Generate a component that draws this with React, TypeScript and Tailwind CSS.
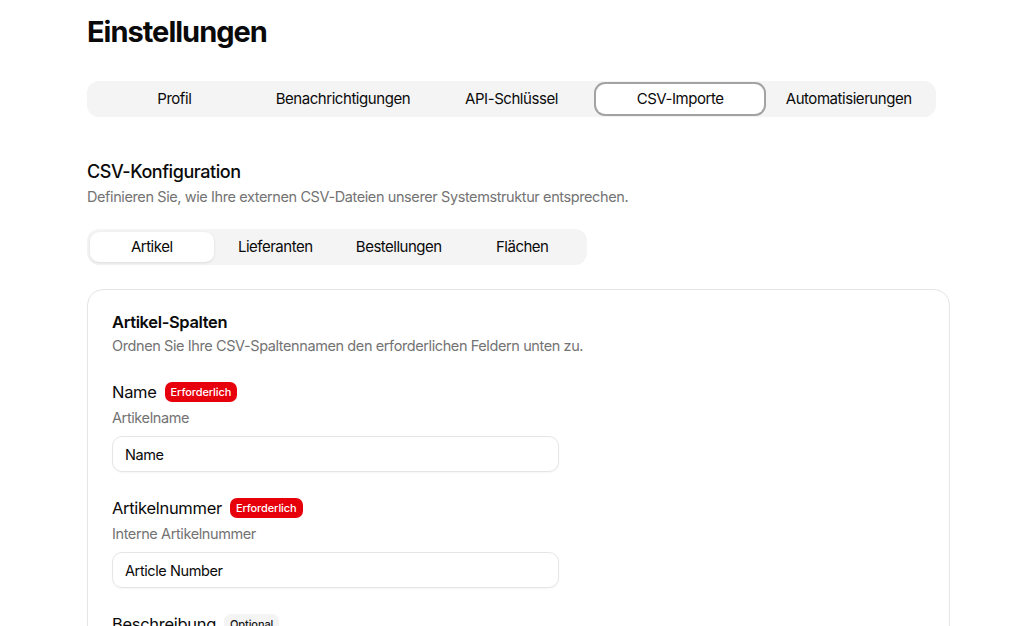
import React, { useState } from 'react';

const mainTabs = ['Profil', 'Benachrichtigungen', 'API-Schlüssel', 'CSV-Importe', 'Automatisierungen'];
const csvTabs = ['Artikel', 'Lieferanten', 'Bestellungen', 'Flächen'];

type Field = { label: string; hint: string; value: string; required: boolean };

const fields: Field[] = [
  { label: 'Name', hint: 'Artikelname', value: 'Name', required: true },
  { label: 'Artikelnummer', hint: 'Interne Artikelnummer', value: 'Article Number', required: true },
  { label: 'Beschreibung', hint: 'Artikelbeschreibung', value: 'Description', required: false },
];

const FieldRow = ({ field }: { field: Field }) => (
  <div className="flex flex-col">
    <div className="flex items-center gap-2 h-[22px]">
      <span className="text-[16.5px] leading-[22px] tracking-[-0.3px] text-[#0a0a0a]">{field.label}</span>
      {field.required ? (
        <span className="rounded-[7px] bg-[#e7000b] px-[6px] h-5 flex items-center text-[11px] font-medium text-white tracking-[-0.1px]">
          Erforderlich
        </span>
      ) : (
        <span className="rounded-[7px] bg-[#f4f4f5] px-[6px] h-5 flex items-center text-[11px] font-medium text-[#171717] tracking-[-0.1px]">
          Optional
        </span>
      )}
    </div>
    <p className="mt-1 text-[14.5px] leading-[22px] tracking-[-0.4px] text-[#737373]">{field.hint}</p>
    <input
      readOnly
      value={field.value}
      className="mt-[7px] h-9 w-[447px] rounded-[10px] border border-[#e5e5e5] px-3 text-[14.5px] tracking-[-0.4px] text-[#0a0a0a] shadow-[0_1px_2px_rgba(0,0,0,0.04)] outline-none"
    />
  </div>
);

export default function App() {
  const [tab, setTab] = useState('CSV-Importe');
  const [csvTab, setCsvTab] = useState('Artikel');

  return (
    <div className="h-[626px] overflow-hidden bg-white pl-[87px] pt-[14px] font-['Inter','Liberation_Sans',sans-serif] text-[#0a0a0a]">
      <h1 className="text-[29px] leading-9 font-bold tracking-[-1px]">Einstellungen</h1>

      <div className="mt-[31px] grid h-9 w-[849px] grid-cols-5 rounded-xl bg-[#f4f4f5] p-[3px]">
        {mainTabs.map((t) => (
          <button
            key={t}
            onClick={() => setTab(t)}
            className={`rounded-[9px] text-[15px] tracking-[-0.45px] ${
              tab === t ? 'bg-white ring-2 ring-[#a3a3a3] shadow-sm' : ''
            }`}
          >
            {t}
          </button>
        ))}
      </div>

      <section className="mt-[43px]">
        <h2 className="text-[18px] leading-6 font-medium tracking-[-0.45px]">CSV-Konfiguration</h2>
        <p className="mt-[1px] text-[14.5px] leading-6 tracking-[-0.4px] text-[#737373]">
          Definieren Sie, wie Ihre externen CSV-Dateien unserer Systemstruktur entsprechen.
        </p>

        <div className="mt-[20px] grid h-9 w-[500px] grid-cols-4 rounded-xl bg-[#f4f4f5] p-[3px]">
          {csvTabs.map((t) => (
            <button
              key={t}
              onClick={() => setCsvTab(t)}
              className={`rounded-[9px] text-[15px] tracking-[-0.5px] ${
                csvTab === t ? 'bg-white shadow-[0_1px_3px_rgba(0,0,0,0.1)]' : ''
              }`}
            >
              {t}
            </button>
          ))}
        </div>

        <div className="mt-[24px] w-[863px] rounded-2xl border border-[#e5e5e5] px-6 pt-[20px] pb-6">
          <h3 className="text-[16.5px] leading-6 font-semibold tracking-[-0.35px]">Artikel-Spalten</h3>
          <p className="text-[14.5px] leading-6 tracking-[-0.4px] text-[#737373]">
            Ordnen Sie Ihre CSV-Spaltennamen den erforderlichen Feldern unten zu.
          </p>
          <div className="mt-[23px] flex flex-col gap-[25px]">
            {fields.map((f) => (
              <FieldRow key={f.label} field={f} />
            ))}
          </div>
        </div>
      </section>
    </div>
  );
}
